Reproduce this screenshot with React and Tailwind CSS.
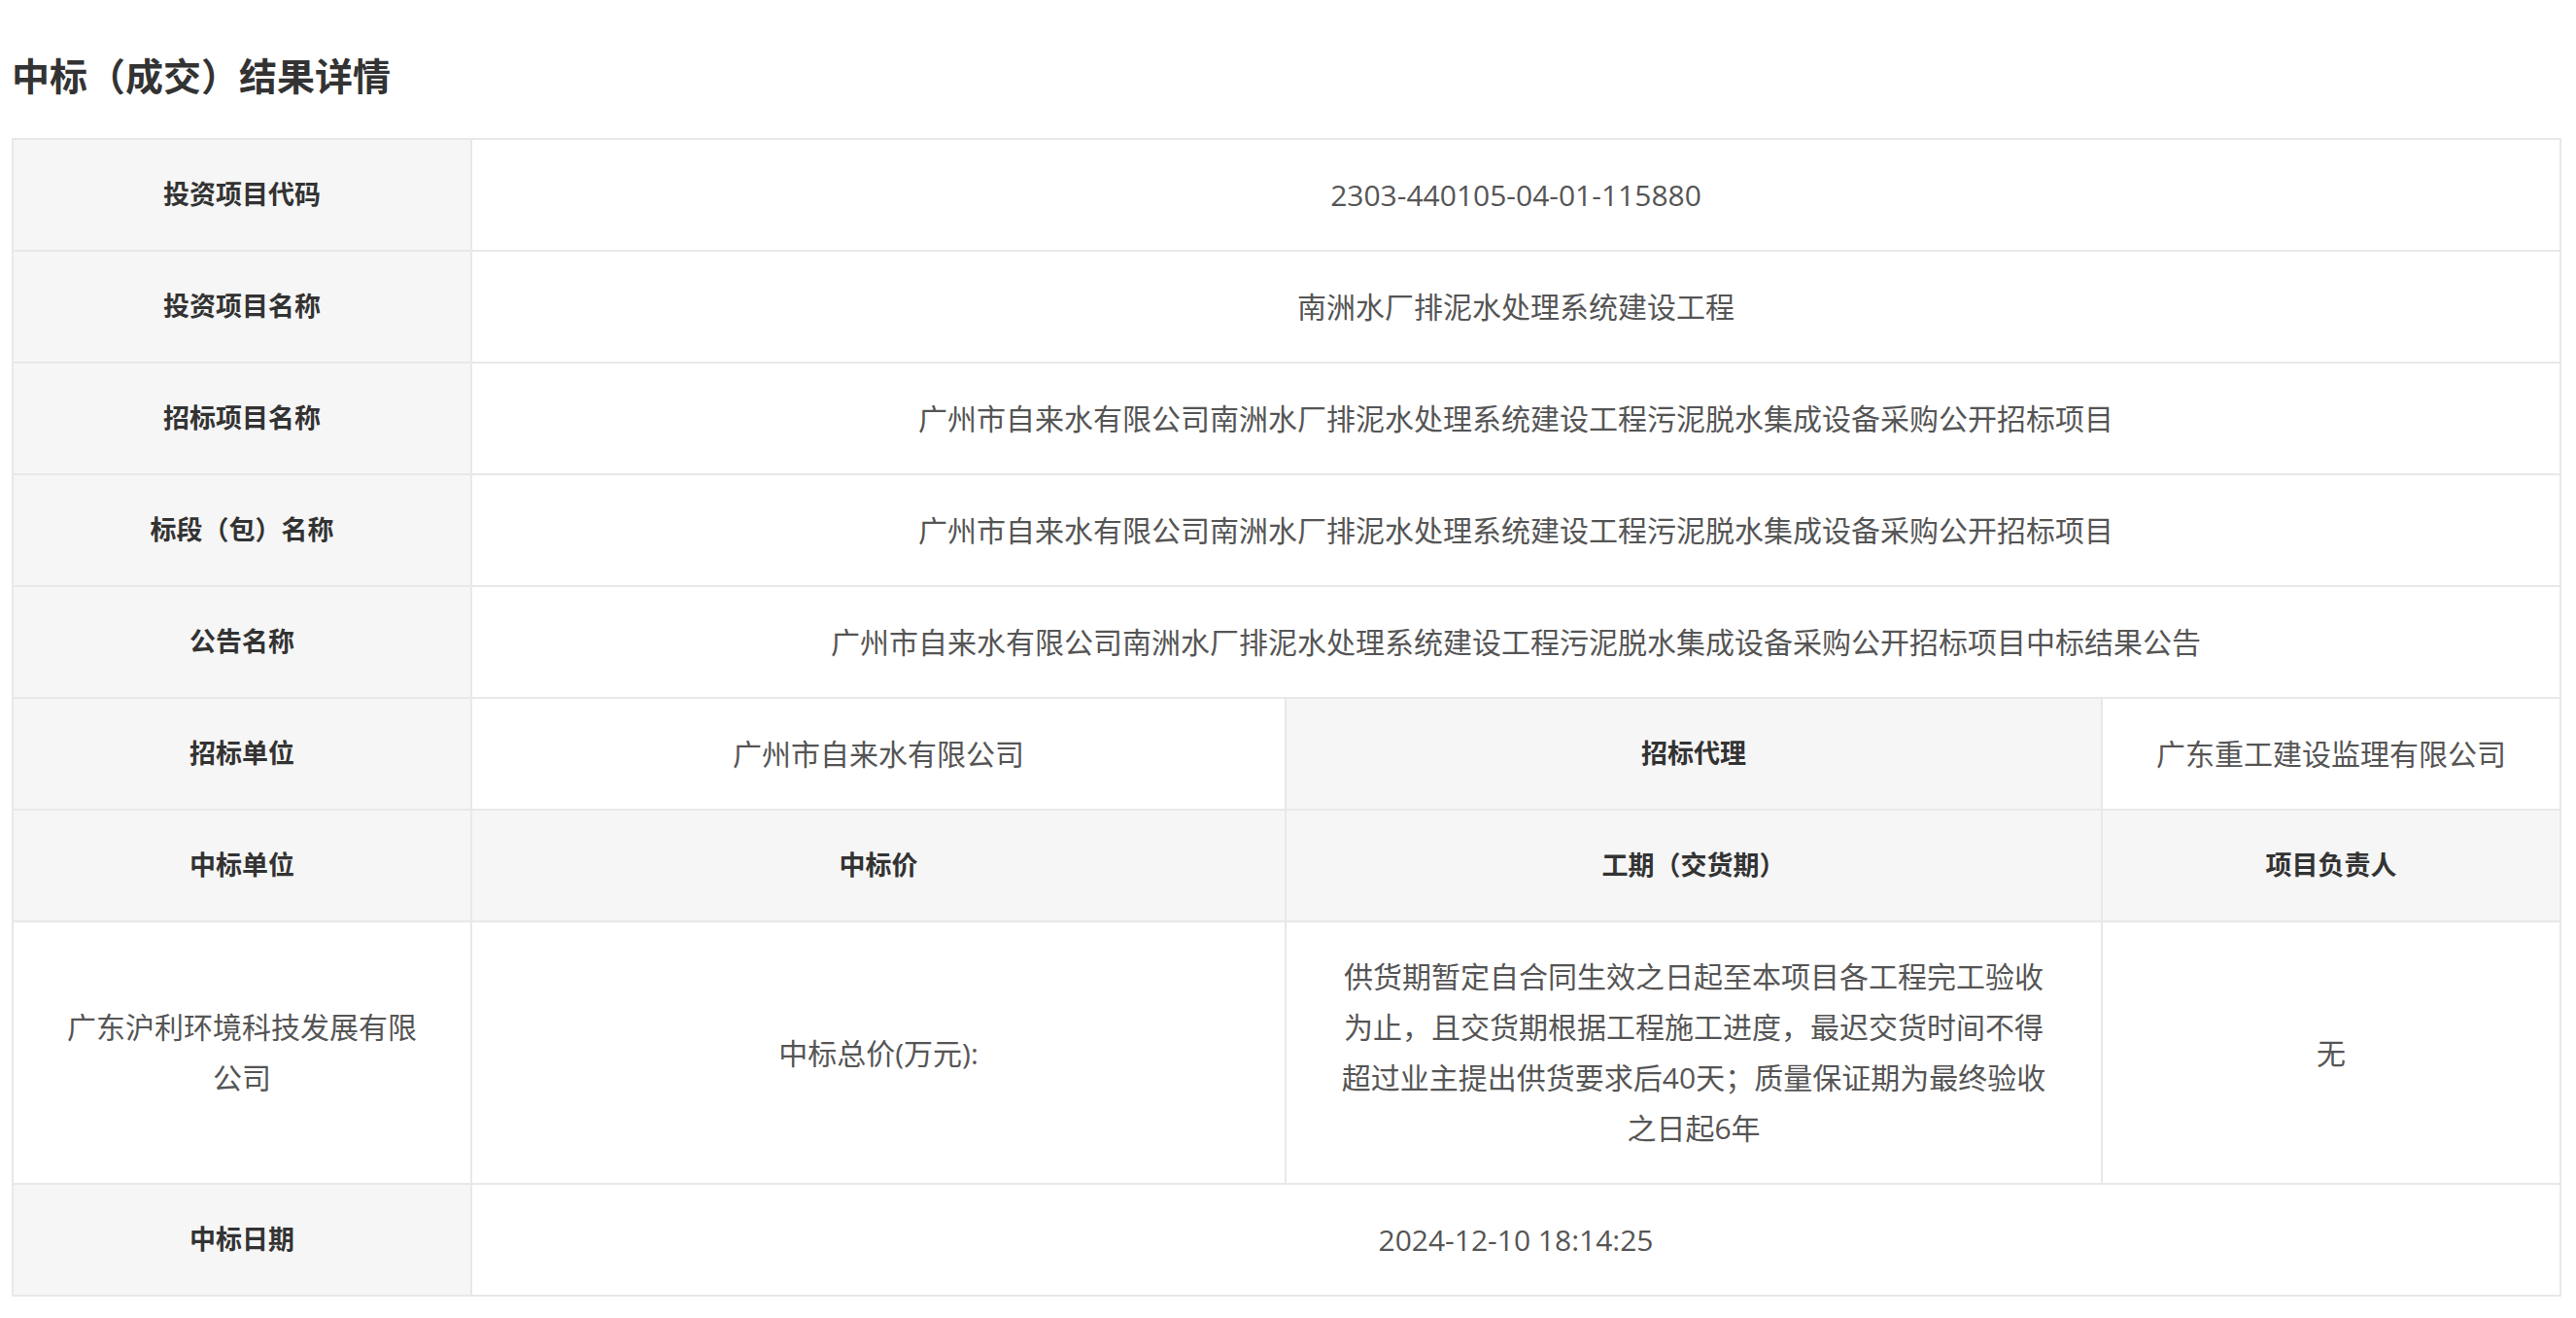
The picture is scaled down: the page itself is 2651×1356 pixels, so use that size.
export default function App() {
  const font = { fontFamily: '"Open Sans","Noto Sans CJK SC",sans-serif' };
  const L = "bg-[#f6f6f6] border-2 border-[#e8e8e8] text-center font-bold text-[27px] text-[#333]";
  const V = "border-2 border-[#e8e8e8] text-center text-[30px] text-[#555]";
  return (
    <div className="bg-white w-[2651px] h-[1356px] pl-[12px] pt-[52px]" style={font}>
      <h1 className="text-[39px] font-bold text-[#333] leading-[52px] mb-[38px]">中标（成交）结果详情</h1>
      <table className="border-collapse w-[2622px] table-fixed">
        <colgroup>
          <col className="w-[472px]" />
          <col className="w-[838px]" />
          <col className="w-[840px]" />
          <col className="w-[472px]" />
        </colgroup>
        <tbody>
          <tr className="h-[115px]"><td className={L}>投资项目代码</td><td colSpan={3} className={V}>2303-440105-04-01-115880</td></tr>
          <tr className="h-[115px]"><td className={L}>投资项目名称</td><td colSpan={3} className={V}>南洲水厂排泥水处理系统建设工程</td></tr>
          <tr className="h-[115px]"><td className={L}>招标项目名称</td><td colSpan={3} className={V}>广州市自来水有限公司南洲水厂排泥水处理系统建设工程污泥脱水集成设备采购公开招标项目</td></tr>
          <tr className="h-[115px]"><td className={L}>标段（包）名称</td><td colSpan={3} className={V}>广州市自来水有限公司南洲水厂排泥水处理系统建设工程污泥脱水集成设备采购公开招标项目</td></tr>
          <tr className="h-[115px]"><td className={L}>公告名称</td><td colSpan={3} className={V}>广州市自来水有限公司南洲水厂排泥水处理系统建设工程污泥脱水集成设备采购公开招标项目中标结果公告</td></tr>
          <tr className="h-[115px]"><td className={L}>招标单位</td><td className={V}>广州市自来水有限公司</td><td className={L}>招标代理</td><td className={V}>广东重工建设监理有限公司</td></tr>
          <tr className="h-[115px]"><td className={L}>中标单位</td><td className={L}>中标价</td><td className={L}>工期（交货期）</td><td className={L}>项目负责人</td></tr>
          <tr className="h-[270px]">
            <td className={V + " px-[50px] leading-[52px]"}>广东沪利环境科技发展有限公司</td>
            <td className={V}>中标总价(万元):</td>
            <td className={V + " px-[48px] leading-[52px]"}>供货期暂定自合同生效之日起至本项目各工程完工验收为止，且交货期根据工程施工进度，最迟交货时间不得超过业主提出供货要求后40天；质量保证期为最终验收之日起6年</td>
            <td className={V}>无</td>
          </tr>
          <tr className="h-[115px]"><td className={L}>中标日期</td><td colSpan={3} className={V}>2024-12-10 18:14:25</td></tr>
        </tbody>
      </table>
    </div>
  );
}
